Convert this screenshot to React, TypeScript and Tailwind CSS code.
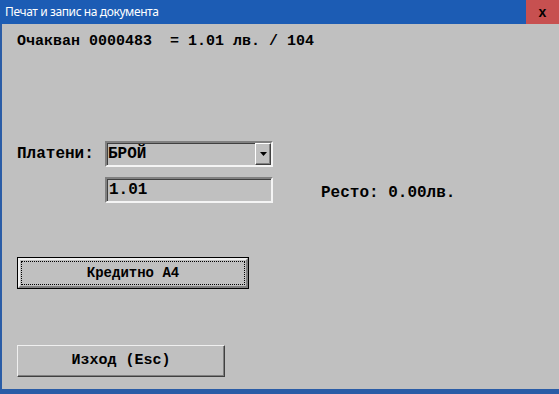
import { useState } from "react";

const mono = "font-['Liberation_Mono','Courier_New',monospace] font-bold text-black";

function Sunken({ children, className = "" }: { children?: React.ReactNode; className?: string }) {
  return (
    <div
      className={`flex h-[26px] w-[168px] border-2 border-t-[#808080] border-l-[#808080] border-b-[#f4f4f4] border-r-[#f4f4f4] shadow-[inset_1px_1px_0_#404040] bg-[#c0c0c0] ${className}`}
    >
      {children}
    </div>
  );
}

export default function App() {
  const [paid] = useState("1.01");

  return (
    <div className="flex h-[394px] w-[559px] flex-col bg-[#c0c0c0]">
      <div className="flex h-[24px] shrink-0 items-center bg-[#1c5cb4]">
        <span className="flex-1 pl-[5px] font-['Noto_Sans',sans-serif] text-[12px] tracking-[-0.4px] text-white">
          Печат и запис на документа
        </span>
        <div className="flex h-full w-[33px] items-center justify-center bg-[#c75050]">
          <span className="font-['Liberation_Sans',sans-serif] text-[14px] font-bold leading-none text-black">x</span>
        </div>
      </div>

      <div className="flex flex-1 flex-col border-l-2 border-b-[5px] border-[#2a5ca6] pl-[15px]">
        <div className={`${mono} mt-[9px] h-[18px] text-[15px] leading-[18px] whitespace-pre`}>
          Очакван 0000483  = 1.01 лв. / 104
        </div>

        <div className="mt-[90px] flex h-[26px] items-center">
          <span className={`${mono} w-[88px] text-[16px]`}>Платени:</span>
          <Sunken>
            <span className={`${mono} flex-1 pl-[1px] text-[16px] leading-[22px]`}>БРОЙ</span>
            <div className="flex h-[22px] w-[16px] items-center justify-center border border-t-white border-l-white border-b-[#404040] border-r-[#404040] shadow-[inset_-1px_-1px_0_#808080]">
              <svg width="7" height="4" viewBox="0 0 7 4">
                <path d="M0 0h7L3.5 4z" fill="#000" />
              </svg>
            </div>
          </Sunken>
        </div>

        <div className="mt-[10px] flex h-[26px] items-center">
          <div className="w-[88px]" />
          <Sunken>
            <span className={`${mono} pl-[2px] text-[16px] leading-[22px]`}>{paid}</span>
          </Sunken>
          <span className={`${mono} ml-[48px] mt-[6px] text-[16px]`}>Ресто: 0.00лв.</span>
        </div>

        <button className="mt-[54px] flex h-[32px] w-[232px] border border-black bg-[#c0c0c0] p-0">
          <div className="flex flex-1 self-stretch border-2 border-t-[#f0f0f0] border-l-[#f0f0f0] border-b-[#808080] border-r-[#808080] p-[1px]">
            <div className="flex flex-1 items-center justify-center border border-dotted border-black">
              <span className={`${mono} text-[14px]`}>Кредитно А4</span>
            </div>
          </div>
        </button>

        <button className="mt-[56px] flex h-[32px] w-[208px] items-center justify-center border border-t-[#f0f0f0] border-l-[#f0f0f0] border-b-[#404040] border-r-[#404040] bg-[#c0c0c0] shadow-[inset_-1px_-1px_0_#808080]">
          <span className={`${mono} text-[15px] whitespace-pre`}>Изход (Esc)</span>
        </button>
      </div>
    </div>
  );
}
